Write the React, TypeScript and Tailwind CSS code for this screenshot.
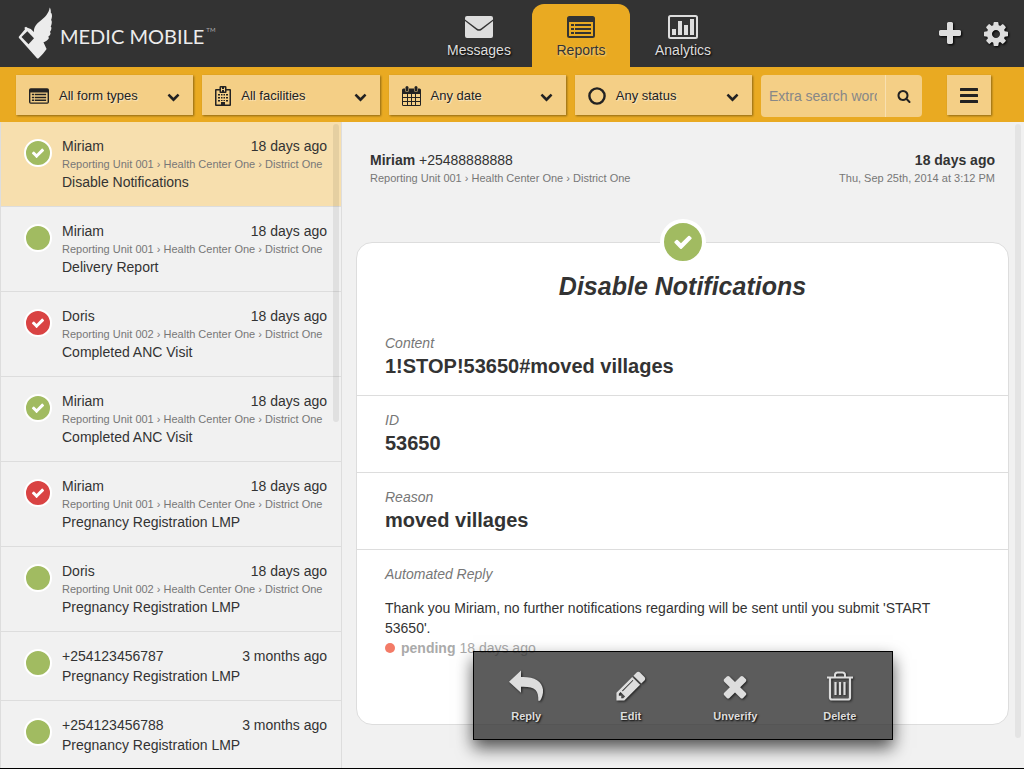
import { useState, type ReactNode } from "react";

type IconProps = { className?: string };

const FA: Record<string, string> = {
  check:
    "M1671 566q0 40-28 68l-724 724-136 136q-28 28-68 28t-68-28l-136-136-362-362q-28-28-28-68t28-68l136-136q28-28 68-28t68 28l294 295 656-657q28-28 68-28t68 28l136 136q28 28 28 68z",
  chevron:
    "M1683 808l-742 741q-19 19-45 19t-45-19l-742-741q-19-19-19-45.5t19-45.5l166-165q19-19 45-19t45 19l531 531 531-531q19-19 45-19t45 19l166 165q19 19 19 45.5t-19 45.5z",
  plus: "M1600 736v192q0 40-28 68t-68 28h-416v416q0 40-28 68t-68 28h-192q-40 0-68-28t-28-68v-416h-416q-40 0-68-28t-28-68v-192q0-40 28-68t68-28h416v-416q0-40 28-68t68-28h192q40 0 68 28t28 68v416h416q40 0 68 28t28 68z",
  cog: "M1152 896q0-106-75-181t-181-75-181 75-75 181 75 181 181 75 181-75 75-181zm512-109v222q0 12-8 23t-20 13l-185 28q-19 54-39 91 35 50 107 138 10 12 10 25t-9 23q-27 37-99 108t-94 71q-12 0-26-9l-138-108q-44 23-91 38-16 136-29 186-7 28-36 28h-222q-14 0-24.5-8.5t-11.5-21.5l-28-184q-49-16-90-37l-141 107q-10 9-25 9-14 0-25-11-126-114-165-168-7-10-7-23 0-12 8-23 15-21 51-66.5t54-70.5q-27-50-41-99l-183-27q-13-2-21-12.5t-8-23.5v-222q0-12 8-23t19-13l186-28q14-46 39-92-40-57-107-138-10-12-10-24 0-10 9-23 26-36 98.5-107.5t94.5-71.5q13 0 26 10l138 107q44-23 91-38 16-136 29-186 7-28 36-28h222q14 0 24.5 8.5t11.5 21.5l28 184q49 16 90 37l142-107q9-9 24-9 13 0 25 10 129 119 165 170 7 8 7 22 0 12-8 23-15 21-51 66.5t-54 70.5q26 50 41 98l183 28q13 2 21 12.5t8 23.5z",
  search:
    "M1216 832q0-185-131.5-316.5t-316.5-131.5-316.5 131.5-131.5 316.5 131.5 316.5 316.5 131.5 316.5-131.5 131.5-316.5zm512 832q0 52-38 90t-90 38q-54 0-90-38l-343-342q-179 124-399 124-143 0-273.5-55.5t-225-150-150-225-55.5-273.5 55.5-273.5 150-225 225-150 273.5-55.5 273.5 55.5 225 150 150 225 55.5 273.5q0 220-124 399l343 343q37 37 37 90z",
  times:
    "M1490 1322q0 40-28 68l-136 136q-28 28-68 28t-68-28l-294-294-294 294q-28 28-68 28t-68-28l-136-136q-28-28-28-68t28-68l294-294-294-294q-28-28-28-68t28-68l136-136q28-28 68-28t68 28l294 294 294-294q28-28 68-28t68 28l136 136q28 28 28 68t-28 68l-294 294 294 294q28 28 28 68z",
  pencil:
    "M491 1536l91-91-235-235-91 91v107h128v128h107zm523-928q0-22-22-22-10 0-17 7l-542 542q-7 7-7 17 0 22 22 22 10 0 17-7l542-542q7-7 7-17zm-54-192l416 416-832 832h-416v-416zm683 96q0 53-37 90l-166 166-416-416 166-165q36-38 90-38 53 0 91 38l235 234q37 39 37 91z",
};

function Glyph({ name, className = "" }: { name: keyof typeof FA } & IconProps) {
  return (
    <svg viewBox="0 0 1792 1792" fill="currentColor" aria-hidden="true" className={className}>
      <path d={FA[name]} />
    </svg>
  );
}

function LogoMark() {
  return (
    <svg viewBox="0 0 36 54" className="h-[54px] w-9 shrink-0" fill="#ececec" aria-hidden="true">
      <path d="M31.700.5C31 6 27 10.500 21 15c-3.500 2.800-5.500 6-5 11l5 10 4-.5c2.500-1 5-2.500 6-4.500l-.8-1.300c1.300-.8 2.200-2 2.400-3.700l-.7-1c1-1.200 1.600-2.600 1.500-4.500l-.7-1c.9-1.700 1.300-3.500 1-5.500l-.6-1c1-2.500 1.200-4.500.5-6.500l-.8-.8C33 3.500 32.600 1.800 31.700.5z" />
      <path d="M.8 29.800 7 22.200l-.6-1.400 1.600-1 1.400 1L12.800 22l6.700 6.500 3.500 6.500 2.200-.2L28.600 42c-2 2.800-5 6.500-8 9.300q-.8.6-1.600 0L.8 30.800z" />
      <path d="M9.300 24.300 16 31.200 10.500 37.200 3.500 30z" fill="#333" />
    </svg>
  );
}

function Envelope() {
  return (
    <svg viewBox="0 0 30 24" className="h-6 w-[30px]" fill="currentColor" aria-hidden="true">
      <path d="M3 1h24a2 2 0 0 1 2 2v1.400L17 13.500q-2 1.300-4 0L1 4.400V3a2 2 0 0 1 2-2z" />
      <path d="M1 6l11.500 9q2.500 1.700 5 0L29 6v15a2 2 0 0 1-2 2H3a2 2 0 0 1-2-2z" />
    </svg>
  );
}

function ListIcon({ className = "" }: IconProps) {
  return (
    <svg viewBox="0 0 28 22" className={className} fill="currentColor" aria-hidden="true">
      <path fillRule="evenodd" d="M2.500 0h23A2.500 2.500 0 0 1 28 2.500v17a2.500 2.500 0 0 1-2.500 2.500h-23A2.500 2.500 0 0 1 0 19.500v-17A2.500 2.500 0 0 1 2.500 0zM2 6v14h24V6z" />
      <path d="M4 8h3v2H4zM8 8h16v2H8zM4 12h3v2H4zM8 12h16v2H8zM4 16h3v2H4zM8 16h16v2H8z" />
    </svg>
  );
}

function ChartIcon() {
  return (
    <svg viewBox="0 0 30 24" className="h-6 w-[30px]" fill="currentColor" aria-hidden="true">
      <rect x="1" y="1" width="28" height="22" rx="1.500" fill="none" stroke="currentColor" strokeWidth="2" />
      <path d="M4 14h4v6H4zM10 6h4v14h-4zM16 10h4v10h-4zM22 4h4v16h-4z" />
    </svg>
  );
}

function HospitalIcon() {
  return (
    <svg viewBox="0 0 16 20" className="h-5 w-4" fill="currentColor" aria-hidden="true">
      <path fillRule="evenodd" d="M4.500 3V1.200A1.200 1.200 0 0 1 5.700 0h4.600a1.200 1.200 0 0 1 1.200 1.200V3H15a1 1 0 0 1 1 1v15a1 1 0 0 1-1 1H1a1 1 0 0 1-1-1V4a1 1 0 0 1 1-1zM1.500 4.500v14H6V16h4v2.500h4.500v-14h-3v1A1.200 1.200 0 0 1 10.300 7H5.700a1.200 1.200 0 0 1-1.200-1.500v-1zM6 1.500v4h1V4h2v1.500h1v-4H9V3H7V1.500z" />
      <path d="M6 16h4v3H6zM3 8h2v1.500H3zM6 8h1.500v1.500H6zM8.500 8H10v1.500H8.500zM11 8h2v1.500h-2zM3 11h2v1.500H3zM6 11h1.500v1.500H6zM8.500 11H10v1.500H8.500zM11 11h2v1.500h-2zM3 14h2v1.500H3zM6 14h1.500v1H6zM8.500 14H10v1H8.500zM11 14h2v1.500h-2z" />
    </svg>
  );
}

function CalendarIcon() {
  return (
    <svg viewBox="0 0 19 20" className="h-5 w-[19px]" fill="currentColor" aria-hidden="true">
      <path fillRule="evenodd" d="M0 4a1.500 1.500 0 0 1 1.500-1.500H3V4a2 2 0 0 0 4 0V2.500h5V4a2 2 0 0 0 4 0V2.500h1.500A1.500 1.500 0 0 1 19 4v14.500a1.500 1.500 0 0 1-1.500 1.500h-16A1.500 1.500 0 0 1 0 18.500zM1 8v3h4V8zM6 8v3h3V8zM10 8v3h3V8zM14 8v3h4V8zM1 12v3h4v-3zM6 12v3h3v-3zM10 12v3h3v-3zM14 12v3h4v-3zM1 16v3h4v-3zM6 16v3h3v-3zM10 16v3h3v-3zM14 16v3h4v-3z" />
      <rect x="3.500" y="0" width="3" height="5.500" rx="1.500" />
      <rect x="12.500" y="0" width="3" height="5.500" rx="1.500" />
    </svg>
  );
}

function CircleIcon() {
  return (
    <svg viewBox="0 0 18 18" className="h-[18px] w-[18px]" aria-hidden="true">
      <circle cx="9" cy="9" r="7.600" fill="none" stroke="currentColor" strokeWidth="2.400" />
    </svg>
  );
}

function BarsIcon() {
  return (
    <svg viewBox="0 0 18 15" className="h-[15px] w-[18px]" fill="currentColor" aria-hidden="true">
      <rect width="18" height="3" rx=".5" />
      <rect y="6" width="18" height="3" rx=".5" />
      <rect y="12" width="18" height="3" rx=".5" />
    </svg>
  );
}

function ReplyIcon() {
  return (
    <svg viewBox="0 0 36 32" className="h-8 w-9" fill="currentColor" aria-hidden="true">
      <path d="M13 .5V7C26 6.500 34 11 35 19.500c.4 4.200-1 8.500-3 11.300h-1.700C30.800 20.500 27 16.300 13 16.800v6L1 11.800z" />
    </svg>
  );
}

function TrashIcon() {
  return (
    <svg viewBox="0 0 28 30" className="h-[30px] w-7" fill="none" stroke="currentColor" aria-hidden="true">
      <path d="M1 6.500h26M9 6.500V4q0-2.500 2.500-2.500h5Q19 1.500 19 4v2.500" strokeWidth="2" />
      <path d="M4 7v19.500a2 2 0 0 0 2 2h16a2 2 0 0 0 2-2V7" strokeWidth="2.200" />
      <path d="M9.500 11v13M14 11v13M18.500 11v13" strokeWidth="2.200" />
    </svg>
  );
}

const tabs: { label: string; icon: ReactNode }[] = [
  { label: "Messages", icon: <Envelope /> },
  { label: "Reports", icon: <ListIcon className="h-[22px] w-7" /> },
  { label: "Analytics", icon: <ChartIcon /> },
];

const filters: { label: string; icon: ReactNode }[] = [
  { label: "All form types", icon: <ListIcon className="h-4 w-5" /> },
  { label: "All facilities", icon: <HospitalIcon /> },
  { label: "Any date", icon: <CalendarIcon /> },
  { label: "Any status", icon: <CircleIcon /> },
];

type Report = { from: string; unit?: string; when: string; form: string; ok: boolean; verified?: boolean };

const reports: Report[] = [
  { from: "Miriam", unit: "001", when: "18 days ago", form: "Disable Notifications", ok: true, verified: true },
  { from: "Miriam", unit: "001", when: "18 days ago", form: "Delivery Report", ok: true },
  { from: "Doris", unit: "002", when: "18 days ago", form: "Completed ANC Visit", ok: false, verified: true },
  { from: "Miriam", unit: "001", when: "18 days ago", form: "Completed ANC Visit", ok: true, verified: true },
  { from: "Miriam", unit: "001", when: "18 days ago", form: "Pregnancy Registration LMP", ok: false, verified: true },
  { from: "Doris", unit: "002", when: "18 days ago", form: "Pregnancy Registration LMP", ok: true },
  { from: "+254123456787", when: "3 months ago", form: "Pregnancy Registration LMP", ok: true },
  { from: "+254123456788", when: "3 months ago", form: "Pregnancy Registration LMP", ok: true },
];

const fields = [
  { name: "Content", value: "1!STOP!53650#moved villages" },
  { name: "ID", value: "53650" },
  { name: "Reason", value: "moved villages" },
];

const actions: { label: string; icon: ReactNode }[] = [
  { label: "Reply", icon: <ReplyIcon /> },
  { label: "Edit", icon: <Glyph name="pencil" className="h-[34px] w-[34px]" /> },
  { label: "Unverify", icon: <Glyph name="times" className="h-[34px] w-[34px]" /> },
  { label: "Delete", icon: <TrashIcon /> },
];

function Lineage({ unit }: { unit: string }) {
  return (
    <span className="block text-[11px] leading-4 text-[#777]">
      Reporting Unit {unit} › Health Center One › District One
    </span>
  );
}

export default function App() {
  const [selected, setSelected] = useState(0);
  const [tab, setTab] = useState("Reports");

  return (
    <div className="flex h-screen flex-col overflow-hidden border-b border-black bg-[#f1f1f1] font-['Liberation_Sans',Arial,sans-serif] text-sm leading-5 text-[#333]">
      <header className="grid h-[67px] shrink-0 grid-cols-[1fr_auto_1fr] bg-[#333]">
        <a href="#home" className="flex items-center gap-1.5 pl-[18px] text-[#ececec]" aria-label="Medic Mobile">
          <LogoMark />
          <span className="flex items-start whitespace-nowrap pt-1 font-[Lato,sans-serif] text-xl leading-6">
            MEDIC MOBILE<span className="pl-0.5 text-[6px] leading-3 text-[#aaa]">TM</span>
          </span>
        </a>
        <nav className="flex items-end pl-[138px]">
          {tabs.map((t) => (
            <button
              key={t.label}
              type="button"
              onClick={() => setTab(t.label)}
              className={
                t.label === tab
                  ? "flex h-[63px] w-[98px] flex-col items-center rounded-t-xl bg-[#e9aa22] pt-[11px] text-[#333] [text-shadow:1px_1px_2px_#fff8]"
                  : "flex h-[63px] w-[106px] flex-col items-center pt-[11px] text-[#ddd] [text-shadow:1px_1px_2px_#000]"
              }
            >
              <span className="flex h-6 items-center">{t.icon}</span>
              <span className="leading-[22px]">{t.label}</span>
            </button>
          ))}
        </nav>
        <div className="flex items-center justify-end gap-[18px] pr-[14px] text-[#ddd]">
          <button type="button" aria-label="Add" className="drop-shadow-[1px_1px_1px_#000]">
            <Glyph name="plus" className="h-7 w-7" />
          </button>
          <button type="button" aria-label="Settings" className="drop-shadow-[1px_1px_1px_#000]">
            <Glyph name="cog" className="h-7 w-7" />
          </button>
        </div>
      </header>

      <div className="flex h-[55px] shrink-0 items-start gap-[9px] bg-[#e9aa22] pl-4 pr-[33px] pt-2">
        {filters.map((f) => (
          <button
            key={f.label}
            type="button"
            className="flex h-10 flex-1 items-center bg-[#f4cf86] px-[13px] pt-0.5 text-[#222] shadow-[1px_1px_2px_#0006]"
          >
            {f.icon}
            <span className="ml-[10px] whitespace-nowrap text-[13px] [text-shadow:1px_1px_1px_#fff8]">{f.label}</span>
            <Glyph name="chevron" className="ml-auto h-[13px] w-[13px]" />
          </button>
        ))}
        <form className="flex h-[42px] w-[161px] overflow-hidden rounded bg-[#f4cf86]" onSubmit={(e) => e.preventDefault()}>
          <input
            aria-label="Extra search words"
            placeholder="Extra search words"
            className="w-[125px] border-r border-[#f8e0b0] bg-transparent px-2 text-sm placeholder:text-[#888] placeholder:opacity-100"
          />
          <button type="submit" aria-label="Search" className="flex flex-1 items-center justify-center text-[#222]">
            <Glyph name="search" className="h-[14px] w-[14px]" />
          </button>
        </form>
        <button
          type="button"
          aria-label="Menu"
          className="ml-4 flex h-10 w-11 items-center justify-center bg-[#f4cf86] text-[#222] shadow-[1px_1px_2px_#0006]"
        >
          <BarsIcon />
        </button>
      </div>

      <div className="flex min-h-0 flex-1">
        <aside className="relative w-[342px] shrink-0 overflow-hidden border-x border-[#ddd]">
          <ul>
            {reports.map((r, i) => (
              <li key={i} className="border-b border-[#ddd]">
                <button
                  type="button"
                  onClick={() => setSelected(i)}
                  className={
                    i === selected
                      ? "flex w-full items-start gap-[10px] bg-[#f7dfae] py-[14px] pl-[23px] pr-[14px] text-left"
                      : "flex w-full items-start gap-[10px] py-[14px] pl-[23px] pr-[14px] text-left"
                  }
                >
                  <span
                    className={
                      r.ok
                        ? "mt-[3px] flex h-7 w-7 shrink-0 items-center justify-center rounded-full border-2 border-white bg-[#a1bb61]"
                        : "mt-[3px] flex h-7 w-7 shrink-0 items-center justify-center rounded-full border-2 border-white bg-[#d94343]"
                    }
                  >
                    {r.verified && <Glyph name="check" className="h-[14px] w-[14px] text-white" />}
                  </span>
                  <span className="block min-w-0 flex-1">
                    <span className="flex justify-between">
                      <span>{r.from}</span>
                      <span>{r.when}</span>
                    </span>
                    {r.unit && <Lineage unit={r.unit} />}
                    <span className="block">{r.form}</span>
                  </span>
                </button>
              </li>
            ))}
          </ul>
          <div className="absolute right-0.5 top-0.5 h-[298px] w-1.5 rounded bg-black/[0.07]" />
        </aside>

        <main className="relative min-w-0 flex-1 overflow-hidden pl-[14px] pr-[15px]">
          <div className="flex justify-between px-[14px] pt-7">
            <div>
              <p>
                <strong>Miriam</strong> +25488888888
              </p>
              <Lineage unit="001" />
            </div>
            <div className="text-right">
              <p className="font-bold">18 days ago</p>
              <p className="text-[11px] leading-4 text-[#777]">Thu, Sep 25th, 2014 at 3:12 PM</p>
            </div>
          </div>

          <section className="relative mt-14 rounded-2xl border border-[#ddd] bg-white pb-[66px]">
            <span className="absolute left-1/2 top-[-24px] flex h-[46px] w-[46px] -translate-x-1/2 items-center justify-center rounded-full border-4 border-white bg-[#a1bb61]">
              <Glyph name="check" className="h-5 w-5 text-white" />
            </span>
            <h2 className="pb-8 pt-7 text-center text-[25px] font-bold italic leading-[30px]">Disable Notifications</h2>
            <dl>
              {fields.map((f) => (
                <div key={f.name} className="mb-[14px] border-b border-[#ddd] px-7 pb-4">
                  <dt className="italic text-[#777]">{f.name}</dt>
                  <dd className="text-xl font-bold leading-[26px]">{f.value}</dd>
                </div>
              ))}
              <div className="pl-7 pr-11">
                <dt className="italic text-[#777]">Automated Reply</dt>
                <dd className="pt-[14px]">
                  <p>Thank you Miriam, no further notifications regarding will be sent until you submit 'START 53650'.</p>
                  <p className="flex items-center text-[#aaa]">
                    <span className="mr-1.5 h-[10px] w-[10px] rounded-full bg-[#f37b67]" />
                    <strong className="mr-1">pending</strong> 18 days ago
                  </p>
                </dd>
              </div>
            </dl>
          </section>

          <div className="absolute bottom-7 left-[131px] grid h-[89px] w-[420px] grid-cols-4 border border-black bg-[#333]/80 shadow-[0_8px_16px_#000a]">
            {actions.map((a) => (
              <button
                key={a.label}
                type="button"
                className="flex flex-col items-center pt-4 text-[11px] font-bold leading-4 text-[#ddd] [text-shadow:1px_1px_2px_#000]"
              >
                <span className="mb-1 flex h-9 items-center drop-shadow-[1px_1px_1px_#000a]">{a.icon}</span>
                {a.label}
              </button>
            ))}
          </div>
          <div className="absolute right-[3px] top-0.5 h-[614px] w-1.5 rounded bg-black/5" />
        </main>
      </div>
    </div>
  );
}
